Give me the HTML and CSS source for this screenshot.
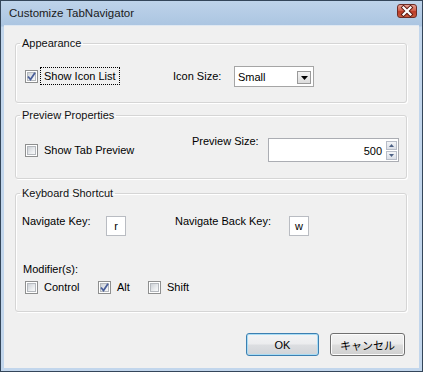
FILE: index.html
```html
<!DOCTYPE html>
<html>
<head>
<meta charset="utf-8">
<link rel="stylesheet" href="styles.css">
</head>
<body>
<div class="window">
  <div class="titlebar">
    <span class="title">Customize TabNavigator</span>
    <span class="close">
      <svg width="18" height="12" viewBox="0 0 18 12">
        <path d="M5.5 2.5 L12.5 9.5 M12.5 2.5 L5.5 9.5" stroke="#5a1a12" stroke-width="4" stroke-linecap="square" fill="none"/>
        <path d="M5.5 2.5 L12.5 9.5 M12.5 2.5 L5.5 9.5" stroke="#ffffff" stroke-width="2.2" stroke-linecap="square" fill="none"/>
      </svg>
    </span>
  </div>
  <div class="client">
    <fieldset class="group g1">
      <legend>Appearance</legend>
      <div class="row r1">
        <label class="check"><span class="box"><span class="in"><svg class="tick" width="9" height="9" viewBox="0 0 9 9"><path d="M1 4.5 L3.5 7.5 L8 0.8" stroke="#4a5f9a" stroke-width="1.8" fill="none"/></svg></span></span><span class="txt focus">Show Icon List</span></label>
        <span class="lbl">Icon Size:</span>
        <div class="combo"><span>Small</span><span class="drop"><svg width="7" height="4" viewBox="0 0 7 4"><path d="M0 0 H7 L3.5 4 Z" fill="#000"/></svg></span></div>
      </div>
    </fieldset>
    <fieldset class="group g2">
      <legend>Preview Properties</legend>
      <div class="row r2">
        <label class="check"><span class="box"><span class="in"></span></span><span class="txt">Show Tab Preview</span></label>
        <span class="lbl top">Preview Size:</span>
        <div class="spin">
          <span class="val">500</span>
          <span class="spinbtns">
            <span class="sb"><svg width="5" height="3" viewBox="0 0 5 3"><path d="M0 3 H5 L2.5 0 Z" fill="#4d6185"/></svg></span>
            <span class="sb"><svg width="5" height="3" viewBox="0 0 5 3"><path d="M0 0 H5 L2.5 3 Z" fill="#4d6185"/></svg></span>
          </span>
        </div>
      </div>
    </fieldset>
    <fieldset class="group g3">
      <legend>Keyboard Shortcut</legend>
      <div class="row r3">
        <span class="lbl">Navigate Key:</span>
        <span class="key">r</span>
        <span></span>
        <span class="lbl">Navigate Back Key:</span>
        <span class="key">w</span>
      </div>
      <div class="mod">Modifier(s):</div>
      <div class="row r4">
        <label class="check"><span class="box"><span class="in"></span></span><span class="txt">Control</span></label>
        <label class="check"><span class="box"><span class="in"><svg class="tick" width="9" height="9" viewBox="0 0 9 9"><path d="M1 4.5 L3.5 7.5 L8 0.8" stroke="#4a5f9a" stroke-width="1.8" fill="none"/></svg></span></span><span class="txt">Alt</span></label>
        <label class="check"><span class="box"><span class="in"></span></span><span class="txt">Shift</span></label>
      </div>
    </fieldset>
    <div class="buttons">
      <button class="btn default">OK</button>
      <button class="btn cancel">キャンセル</button>
    </div>
  </div>
</div>
</body>
</html>
```

FILE: styles.css
```css
html, body {
  margin: 0;
  padding: 0;
  background: #f0f0f0;
}
body {
  font-family: "Liberation Sans", Arial, "Noto Sans CJK JP", sans-serif;
  font-size: 11px;
  color: #000;
}
.window {
  width: 423px;
  height: 372px;
  box-sizing: border-box;
  border: 1px solid #34465a;
  background: linear-gradient(#bed3ea, #abc5e1 25px, #c2d6ec 26px, #c2d6ec);
  display: flex;
  flex-direction: column;
}
.titlebar {
  height: 24px;
  flex: none;
  display: flex;
  justify-content: space-between;
  align-items: flex-start;
  padding: 0 5px 0 8px;
}
.title {
  font-size: 11.5px;
  line-height: 14px;
  margin-top: 5px;
  color: #1a1a1a;
}
.close {
  margin-top: 3px;
  width: 20px;
  height: 14px;
  box-sizing: border-box;
  border: 1px solid #6e2c25;
  border-radius: 3px;
  background: linear-gradient(#e6a195, #d2624e 45%, #bb3a27 55%, #c85a3c);
  display: flex;
  align-items: center;
  justify-content: center;
}
.close svg { display: block; }
.client {
  flex: 1;
  margin: 0 3px 3px;
  background: #f0f0f0;
  border-top: 1px solid #dfe8f2;
  display: flex;
  flex-direction: column;
}
.group {
  margin: 0 0 0 11px;
  width: 392px;
  box-sizing: border-box;
  border: 1px solid #d5d5d5;
  border-radius: 3px;
  box-shadow: 1px 1px 0 #ffffff, inset 1px 1px 0 #ffffff;
  padding: 0;
  min-width: 0;
}
.group legend {
  margin-left: 4px;
  padding: 0 2px;
  line-height: 14px;
  color: #111;
}
.g1 { margin-top: 10px; height: 67px; }
.g2 { margin-top: 5px; height: 71px; }
.g3 { margin-top: 7px; height: 126px; }

.row { display: grid; }
.r1 {
  margin: 15px 0 0 9px;
  grid-template-columns: 148px 61px 80px;
  align-items: center;
  height: 21px;
}
.r2 {
  margin: 16px 0 0 9px;
  grid-template-columns: 167px 76px 131px;
  align-items: center;
  height: 24px;
}
.r3 {
  margin: 14px 0 0 6px;
  grid-template-columns: 84px 20px 49px 114px 20px;
  align-items: start;
}
.r4 {
  margin: 2px 0 0 9px;
  grid-template-columns: 73px 50px auto;
  align-items: center;
}
.mod {
  margin: 26px 0 0 7px;
  line-height: 14px;
}
.lbl { line-height: 14px; white-space: nowrap; }
.r2 .lbl.top { align-self: start; margin-top: -4px; }

.check {
  display: flex;
  align-items: center;
}
.box {
  width: 13px;
  height: 13px;
  box-sizing: border-box;
  border: 1px solid #8e8f8f;
  padding: 1px;
  background: #fff;
  flex: none;
}
.in {
  display: flex;
  align-items: center;
  justify-content: center;
  width: 9px;
  height: 9px;
  box-sizing: border-box;
  border: 1px solid #b4b8bd;
  background: linear-gradient(135deg, #cdd1d6, #eef0f2 70%, #f8f8f8);
  overflow: visible;
}
.tick { display: block; flex: none; }
.txt {
  margin-left: 2px;
  padding: 1px 3px;
  border: 1px dotted transparent;
  line-height: 14px;
  white-space: nowrap;
}
.txt.focus { border-color: #000; }

.combo {
  height: 21px;
  box-sizing: border-box;
  border: 1px solid #a5a5a5;
  background: #fff;
  display: flex;
  align-items: center;
  justify-content: space-between;
  padding: 0 2px 0 3px;
  margin-top: 1px;
}
.drop {
  width: 14px;
  height: 13px;
  box-sizing: border-box;
  border: 1px solid #9a9a9a;
  background: linear-gradient(#f4f4f4, #dcdcdc);
  display: flex;
  align-items: center;
  justify-content: center;
  margin-top: 2px;
}
.drop svg { display: block; }

.spin {
  height: 24px;
  box-sizing: border-box;
  border: 1px solid #abadb3;
  background: #fff;
  display: flex;
  align-items: center;
  justify-content: flex-end;
  padding: 0 1px 0 0;
}
.val { margin-right: 4px; margin-top: 1px; }
.spinbtns {
  display: flex;
  flex-direction: column;
  gap: 1px;
  width: 11px;
}
.sb {
  height: 9px;
  box-sizing: border-box;
  border: 1px solid #b7bcc7;
  background: linear-gradient(#f3f5f8, #dadee6);
  display: flex;
  align-items: center;
  justify-content: center;
}
.sb svg { display: block; }

.key {
  width: 20px;
  height: 20px;
  box-sizing: border-box;
  border: 1px solid #b9bcc2;
  background: #fff;
  margin-top: 2px;
  display: flex;
  align-items: center;
  justify-content: center;
  font-size: 11px;
}

.buttons {
  display: flex;
  justify-content: flex-end;
  gap: 11px;
  margin: 21px 14px 0 0;
}
.btn {
  height: 23px;
  box-sizing: border-box;
  border-radius: 3px;
  font-family: "Liberation Sans", Arial, "Noto Sans CJK JP", sans-serif;
  font-size: 11px;
  color: #000;
  padding: 0;
  margin: 0;
}
.default {
  width: 73px;
  border: 1px solid #3c7fb1;
  background: linear-gradient(#f3f4f5, #ebecee 48%, #dcdee1 52%, #d1d4d8);
  box-shadow: inset 0 0 0 1px #a9dcf4;
}
.cancel {
  width: 75px;
  border: 1px solid #707070;
  background: linear-gradient(#f2f2f2, #ebebeb 48%, #dddddd 52%, #cfcfcf);
  box-shadow: inset 0 0 0 1px #fcfcfc;
}
```
